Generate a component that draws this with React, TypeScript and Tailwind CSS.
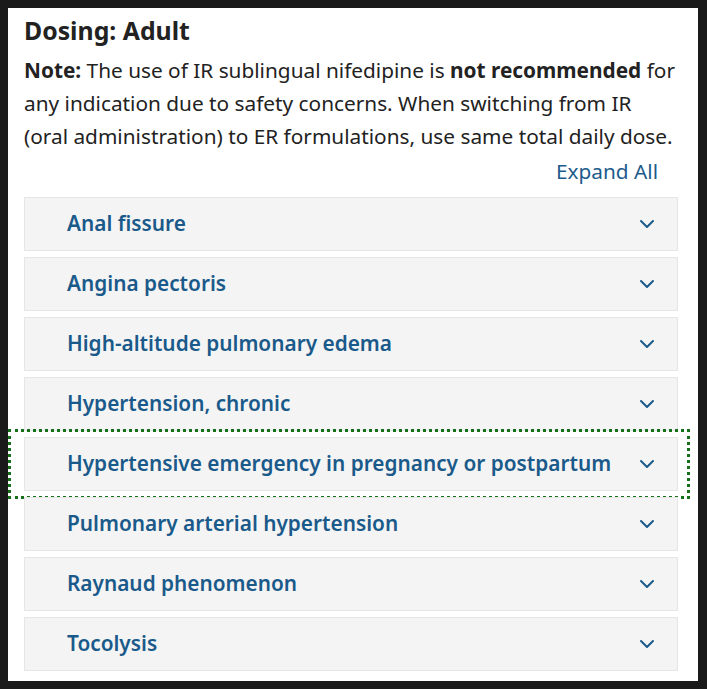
import React from "react";

const items = [
  "Anal fissure",
  "Angina pectoris",
  "High-altitude pulmonary edema",
  "Hypertension, chronic",
  "Hypertensive emergency in pregnancy or postpartum",
  "Pulmonary arterial hypertension",
  "Raynaud phenomenon",
  "Tocolysis",
];

function Chevron() {
  return (
    <svg width="16" height="10" viewBox="0 0 16 10" fill="none" className="shrink-0">
      <polyline points="2,2 8,8 14,2" stroke="#1a5a8a" strokeWidth="2" strokeLinecap="round" strokeLinejoin="round" />
    </svg>
  );
}

export default function App() {
  return (
    <div
      className="w-[707px] h-[689px] bg-[#1a1a1a] pt-[8px] pl-[8px]"
      style={{ fontFamily: '"Noto Sans", "Open Sans", sans-serif' }}
    >
      <div className="w-[690px] h-[673px] bg-white pl-[16px] pr-[20px] pt-[6px]">
        <h2 className="text-[24.8px] leading-[32px] font-bold text-[#222222]">Dosing: Adult</h2>
        <p className="mt-[8px] text-[20.8px] leading-[33px] text-[#222222]">
          <b className="font-bold">Note:</b> The use of IR sublingual nifedipine is{" "}
          <b className="font-bold">not recommended</b> for any indication due to safety concerns. When switching from IR
          (oral administration) to ER formulations, use same total daily dose.
        </p>
        <div className="flex justify-end pr-[20px] mt-[3px]">
          <span className="text-[20.8px] leading-[30px] text-[#1d5b8c]">Expand All</span>
        </div>
        <div className="mt-[11px] flex flex-col gap-[6px]">
          {items.map((t, i) => (
            <div key={t} className="relative">
              {i === 4 && (
                <span className="absolute -left-[16px] -right-[12px] -top-[8px] -bottom-[8px] border-[3px] border-dotted border-[#16701a] pointer-events-none" />
              )}
              <div className="h-[54px] bg-[#f4f4f4] border border-[#e6e6e6] flex items-center justify-between pl-[42px] pr-[22px]">
                <span className="text-[20.8px] font-semibold text-[#1a5a8a]">{t}</span>
                <Chevron />
              </div>
            </div>
          ))}
        </div>
      </div>
    </div>
  );
}
